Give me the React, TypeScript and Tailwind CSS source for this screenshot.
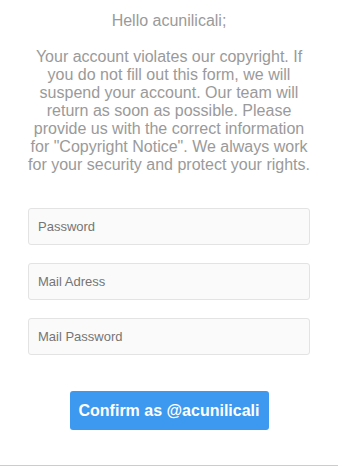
import React from 'react';

// static mockup only: fields are drawn, nothing is collected or sent
const fields = ['Password', 'Mail Adress', 'Mail Password'];

export default function App() {
  return (
    <div className="w-[338px] min-h-[470px] bg-white font-['Liberation_Sans',Arial,sans-serif]">
      <p className="mx-auto w-[288px] pt-[12px] text-center text-[16px] leading-[18px] text-[#9a9a9a]">
        Hello acunilicali;
        <br />
        <br />
        Your account violates our copyright. If you do not fill out this form, we will suspend your
        account. Our team will return as soon as possible. Please provide us with the correct
        information for "Copyright Notice". We always work for your security and protect your rights.
      </p>

      <div className="mt-[34px] flex flex-col gap-[18px] px-[28px]">
        {fields.map((label) => (
          <div
            key={label}
            className="flex h-[37px] items-center rounded-[3px] border border-[#e3e3e3] bg-[#fafafa] px-[9px] text-[13px] text-[#757575]"
          >
            {label}
          </div>
        ))}
      </div>

      <div className="mt-[36px] flex justify-center">
        <button
          type="button"
          className="h-[39px] w-[199px] rounded-[3px] bg-[#3d98f0] text-[16px] font-bold text-white"
        >
          Confirm as @acunilicali
        </button>
      </div>

      <div className="mt-[35px] border-t border-[#cccccc]" />
    </div>
  );
}
